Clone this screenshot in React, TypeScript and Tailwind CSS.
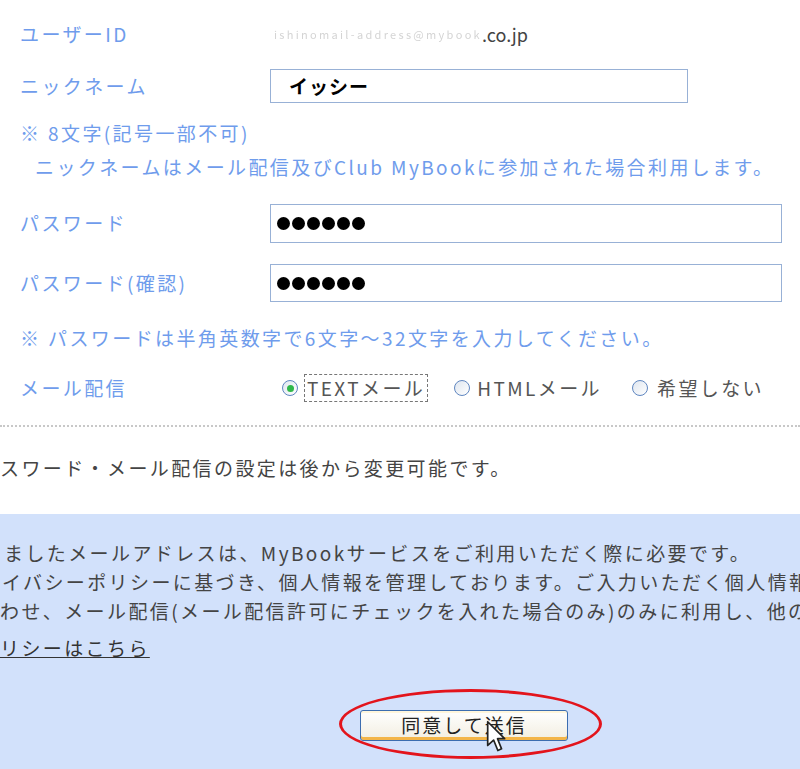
import React from 'react';

const font = { fontFamily: '"Noto Sans CJK JP", "Noto Sans", sans-serif' };

function Radio({ checked }: { checked?: boolean }) {
  return (
    <span className="flex h-[16px] w-[16px] items-center justify-center rounded-full border-[1.5px] border-[#5f86c0] bg-gradient-to-br from-[#dfe6ef] to-white">
      {checked && <span className="h-[7px] w-[7px] rounded-full bg-[#2fb84a]" />}
    </span>
  );
}

function Dots() {
  return (
    <div className="flex gap-[2px]">
      {[0, 1, 2, 3, 4, 5].map((i) => (
        <span key={i} className="h-[13px] w-[13px] rounded-full bg-black" />
      ))}
    </div>
  );
}

export default function App() {
  return (
    <div className="h-[769px] w-[800px] overflow-hidden bg-white text-[19px] tracking-[2.4px]" style={font}>
      {/* form */}
      <div className="pt-[14px] text-[#6f9cec]">
        <div className="flex h-[40px] items-center">
          <div className="w-[270px] pl-[20px]">ユーザーID</div>
          <div className="flex items-center pl-[4px]">
            <span className="text-[11px] tracking-[2.3px] text-[#d4d4d4] blur-[0.6px]">ishinomail-address@mybook</span>
            <span className="text-[18px] tracking-normal text-[#444]">.co.jp</span>
          </div>
        </div>

        <div className="mt-[15px] flex h-[34px] items-center">
          <div className="w-[270px] pl-[20px]">ニックネーム</div>
          <div className="flex h-[34px] w-[418px] items-center border-[1.5px] border-[#98b1d6] pl-[18px] font-bold tracking-[1px] text-black">
            イッシー
          </div>
        </div>

        <div className="mt-[15px] flex h-[30px] items-center pl-[20px]">※ 8文字(記号一部不可)</div>
        <div className="mt-[4px] flex h-[30px] items-center pl-[35px]">
          ニックネームはメール配信及びClub MyBookに参加された場合利用します。
        </div>

        <div className="mt-[22px] flex h-[39px] items-center">
          <div className="w-[270px] pl-[20px]">パスワード</div>
          <div className="flex h-[39px] w-[512px] items-center border-[1.5px] border-[#98b1d6] pl-[6px]">
            <Dots />
          </div>
        </div>

        <div className="mt-[21px] flex h-[38px] items-center">
          <div className="w-[270px] pl-[20px]">パスワード(確認)</div>
          <div className="flex h-[38px] w-[512px] items-center border-[1.5px] border-[#98b1d6] pl-[6px]">
            <Dots />
          </div>
        </div>

        <div className="mt-[21px] flex h-[30px] items-center pl-[20px]">
          ※ パスワードは半角英数字で6文字～32文字を入力してください。
        </div>

        <div className="mt-[20px] flex h-[30px] items-center">
          <div className="w-[282px] pl-[20px]">メール配信</div>
          <div className="flex items-center text-[#555]">
            <Radio checked />
            <span className="ml-[6px] border border-dashed border-[#777] px-[2px] leading-[26px]">TEXTメール</span>
            <span className="ml-[26px]"><Radio /></span>
            <span className="ml-[7px]">HTMLメール</span>
            <span className="ml-[30px]"><Radio /></span>
            <span className="ml-[9px]">希望しない</span>
          </div>
        </div>
      </div>

      <div className="mt-[22px] border-t-2 border-dotted border-[#c8c8c8]" />

      <div className="mt-[26px] flex h-[30px] items-center whitespace-nowrap text-[#444]">
        <span>スワード・メール配信の設定は後から変更可能です。</span>
      </div>

      {/* notice panel */}
      <div className="mt-[31px] h-[300px] bg-[#d2e1fb] pt-[25px] text-[#444]">
        <div className="flex h-[29px] items-center whitespace-nowrap pl-[4px]">
          <span>ましたメールアドレスは、MyBookサービスをご利用いただく際に必要です。</span>
        </div>
        <div className="flex h-[29px] items-center whitespace-nowrap pl-[2px]">
          <span>イバシーポリシーに基づき、個人情報を管理しております。ご入力いただく個人情報</span>
        </div>
        <div className="flex h-[29px] items-center whitespace-nowrap">
          <span>わせ、メール配信(メール配信許可にチェックを入れた場合のみ)のみに利用し、他の</span>
        </div>
        <div className="mt-[8px] flex h-[29px] items-center whitespace-nowrap">
          <span className="text-[#333] underline">リシーはこちら</span>
        </div>

        <div className="mt-[47px] flex justify-center pl-[128px]">
          <div className="relative">
            <button className="h-[31px] w-[208px] rounded-[3px] border border-[#3c6db0] bg-gradient-to-b from-white to-[#f2eee0] text-[19px] tracking-[2px] text-[#222] shadow-[inset_0_-3px_0_#f3b548,inset_0_2px_0_#fff6dc]">
              同意して送信
            </button>
            <span className="pointer-events-none absolute -left-[21px] -top-[21px] h-[70px] w-[263px] rounded-[50%] border-[3px] border-[#e3141c]" />
            <svg className="pointer-events-none absolute left-[126px] top-[10px]" width="22" height="34" viewBox="0 0 13 20">
              <path d="M1 1 L1 15 L4.5 11.8 L7 18 L9.2 17 L6.8 11 L11 11 Z" fill="#fff" stroke="#222" strokeWidth="1" strokeLinejoin="round" />
            </svg>
          </div>
        </div>
      </div>
    </div>
  );
}
